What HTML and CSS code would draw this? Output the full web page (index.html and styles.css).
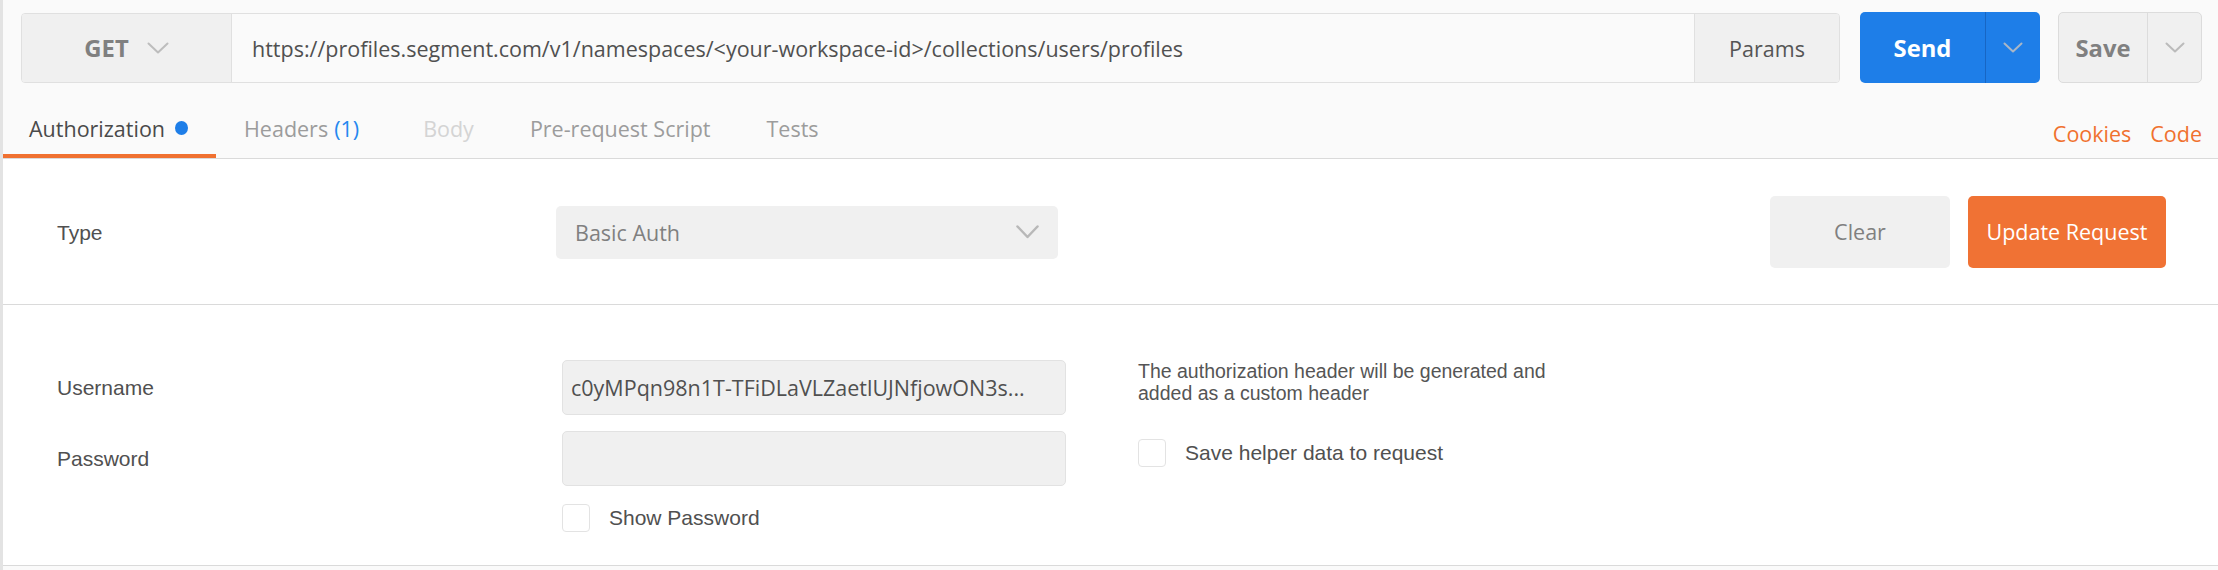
FILE: index.html
```html
<!DOCTYPE html>
<html lang="en">
<head>
<meta charset="utf-8">
<title>Request – Authorization</title>
<link rel="stylesheet" href="styles.css">
</head>
<body>
<div class="app">
  <div class="request-bar">
    <div class="url-group">
      <div class="method">
        <span class="method-name">GET</span>
        <svg class="chev chev-method" viewBox="0 0 22 12" width="22" height="12"><polyline points="1.5,1.5 11,10.5 20.5,1.5"/></svg>
      </div>
      <div class="url-input">https://profiles.segment.com/v1/namespaces/&lt;your-workspace-id&gt;/collections/users/profiles</div>
      <div class="params">Params</div>
    </div>
    <div class="split-btn send">
      <div class="split-main">Send</div>
      <div class="split-drop"><svg class="chev chev-btn" viewBox="0 0 20 11" width="20" height="11"><polyline points="1.5,1.5 10,9.5 18.5,1.5"/></svg></div>
    </div>
    <div class="split-btn save">
      <div class="split-main">Save</div>
      <div class="split-drop"><svg class="chev chev-btn" viewBox="0 0 20 11" width="20" height="11"><polyline points="1.5,1.5 10,9.5 18.5,1.5"/></svg></div>
    </div>
  </div>

  <div class="tabs-row">
    <div class="tab tab-active">Authorization<span class="dot"></span></div>
    <div class="tab">Headers <span class="count">(1)</span></div>
    <div class="tab tab-disabled">Body</div>
    <div class="tab">Pre-request Script</div>
    <div class="tab">Tests</div>
    <div class="tab-links"><span>Cookies</span><span>Code</span></div>
  </div>

  <div class="panel">
    <section class="type-row">
      <div class="field-label">Type</div>
      <div class="select">
        <span>Basic Auth</span>
        <svg class="chev chev-select" viewBox="0 0 23 14" width="23" height="14"><polyline points="1.5,1.5 11.5,12 21.5,1.5"/></svg>
      </div>
      <div class="type-actions">
        <div class="btn btn-clear">Clear</div>
        <div class="btn btn-update">Update Request</div>
      </div>
    </section>

    <section class="creds">
      <div class="field-label row-user">Username</div>
      <div class="text-input row-user">c0yMPqn98n1T-TFiDLaVLZaetlUJNfjowON3s...</div>
      <div class="field-label row-pass">Password</div>
      <div class="text-input row-pass"></div>
      <div class="check-row row-show"><span class="checkbox"></span><span class="check-label">Show Password</span></div>
      <div class="helper">
        <p class="help-text">The authorization header will be generated and<br>added as a custom header</p>
        <div class="check-row"><span class="checkbox"></span><span class="check-label">Save helper data to request</span></div>
      </div>
    </section>
  </div>
</div>
</body>
</html>
```

FILE: styles.css
```css
* { box-sizing: border-box; }

html, body {
  margin: 0;
  padding: 0;
}

body {
  background: #fafafa;
  font-family: "Open Sans", "Noto Sans", sans-serif;
  font-size: 21.5px;
  color: #505050;
}

.app {
  border-left: 3px solid #e3e3e3;
  min-height: 570px;
  background: #fafafa;
}

/* ---------- request bar ---------- */
.request-bar {
  display: flex;
  padding: 12px 16px 0 18px;
  height: 83px;
}

.url-group {
  flex: 1;
  display: flex;
  border: 1px solid #e0e0e0;
  border-radius: 4px;
  overflow: hidden;
  margin-top: 1px;
}

.method {
  width: 210px;
  background: #f0f0f0;
  border-right: 1px solid #e0e0e0;
  display: flex;
  align-items: center;
  justify-content: center;
  gap: 18px;
}

.method-name {
  font-weight: 700;
  font-size: 23.8px;
  color: #808080;
}

.chev polyline {
  fill: none;
  stroke-linecap: round;
  stroke-linejoin: round;
}

.chev-method polyline { stroke: #bdbdbd; stroke-width: 2; }

.url-input {
  flex: 1;
  display: flex;
  align-items: center;
  padding-left: 20px;
  background: #fafafa;
  color: #505050;
  white-space: nowrap;
  overflow: hidden;
}

.params {
  width: 145px;
  background: #f0f0f0;
  border-left: 1px solid #e0e0e0;
  display: flex;
  align-items: center;
  justify-content: center;
  color: #555;
}

.split-btn {
  display: flex;
  border-radius: 5px;
  overflow: hidden;
  font-weight: 700;
  font-size: 23.8px;
}

.split-main {
  display: flex;
  align-items: center;
  justify-content: center;
}

.split-drop {
  display: flex;
  align-items: center;
  justify-content: center;
}

.send {
  margin-left: 20px;
  width: 180px;
  background: #1e7ee8;
  color: #fff;
}
.send .split-main { width: 125px; }
.send .split-drop { flex: 1; border-left: 1px solid #1766c4; }
.send .chev-btn polyline { stroke: #a9b6c6; stroke-width: 2; }

.save {
  margin-left: 18px;
  width: 144px;
  background: #f0f0f0;
  border: 1px solid #dcdcdc;
  color: #808080;
}
.save .split-main { width: 88px; }
.save .split-drop { flex: 1; border-left: 1px solid #dcdcdc; }
.save .chev-btn polyline { stroke: #bbbbbb; stroke-width: 2; }

/* ---------- tabs ---------- */
.tabs-row {
  display: flex;
  height: 76px;
  border-bottom: 1px solid #dadada;
}

.tab {
  height: 75px;
  padding: 19px 28px 0;
  border-bottom: 4px solid transparent;
  display: flex;
  align-items: center;
  color: #9c9c9c;
  white-space: nowrap;
}

.tab-active {
  padding-left: 26px;
  color: #4a4a4a;
  border-bottom-color: #f07131;
}

.tab-disabled { color: #d4d4d4; }

.count {
  color: #2587ef;
  margin-left: 6px;
  margin-right: 8px;
}

.dot {
  display: inline-block;
  width: 13px;
  height: 14px;
  border-radius: 50%;
  background: #1e7ee8;
  margin-left: 10px;
}

.tab-links {
  margin-left: auto;
  display: flex;
  align-items: center;
  gap: 19px;
  padding: 25px 16px 0 0;
  color: #f0712e;
}

/* ---------- auth panel ---------- */
.panel {
  background: #fff;
}

.field-label {
  font-family: "Liberation Sans", Arial, sans-serif;
  font-size: 21px;
  color: #505050;
}

.type-row {
  display: flex;
  align-items: center;
  height: 146px;
  padding: 0 52px 0 54px;
  border-bottom: 1px solid #dadada;
}

.type-row .field-label {
  width: 499px;
  padding-top: 2px;
}

.select {
  width: 502px;
  height: 53px;
  background: #f0f0f0;
  border-radius: 5px;
  display: flex;
  align-items: center;
  justify-content: space-between;
  padding: 0 19px 0 19px;
  color: #808080;
  margin-top: 1px;
}

.chev-select polyline { stroke: #b8b8b8; stroke-width: 2.5; }

.type-actions {
  margin-left: auto;
  display: flex;
  gap: 18px;
}

.btn {
  height: 72px;
  border-radius: 5px;
  display: flex;
  align-items: center;
  justify-content: center;
}

.btn-clear {
  width: 180px;
  background: #f0f0f0;
  color: #808080;
}

.btn-update {
  width: 198px;
  background: #f07234;
  color: #fff;
}

.creds {
  display: grid;
  grid-template-columns: 505px 504px 1fr;
  grid-template-rows: 55px 55px 28px;
  row-gap: 16px;
  align-items: center;
  padding: 55px 0 35px 54px;
  border-bottom: 1px solid #dadada;
}

.creds .row-user { grid-row: 1; }
.creds .row-pass { grid-row: 2; }
.creds .row-show { grid-row: 3; grid-column: 2; align-self: start; margin-top: 2px; }

.text-input {
  height: 55px;
  background: #f0f0f0;
  border: 1px solid #e2e2e2;
  border-radius: 5px;
  display: flex;
  align-items: center;
  padding-left: 8px;
  color: #505050;
  white-space: nowrap;
  overflow: hidden;
}

.helper {
  grid-column: 3;
  grid-row: 1 / span 3;
  align-self: start;
  padding-left: 72px;
}

.help-text {
  margin: 0;
  font-family: "Liberation Sans", Arial, sans-serif;
  font-size: 19.5px;
  line-height: 22px;
  color: #555;
}

.check-row {
  display: flex;
  align-items: center;
  gap: 19px;
}

.helper .check-row { margin-top: 35px; }

.checkbox {
  width: 28px;
  height: 28px;
  border: 1px solid #e3e3e3;
  border-radius: 4px;
  background: #fff;
  flex: none;
}

.check-label {
  font-family: "Liberation Sans", Arial, sans-serif;
  font-size: 21px;
  color: #505050;
}
```
